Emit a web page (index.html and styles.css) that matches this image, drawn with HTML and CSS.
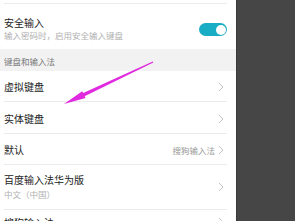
FILE: index.html
```html
<!DOCTYPE html>
<html lang="zh-CN">
<head>
<meta charset="utf-8">
<link rel="stylesheet" href="styles.css">
</head>
<body>
<div class="screen">
  <div class="panel">
    <div class="top-strip"></div>
    <div class="row row-secure">
      <div class="texts">
        <div class="title">安全输入</div>
        <div class="sub">输入密码时，启用安全输入键盘</div>
      </div>
      <div class="toggle"><span class="knob"></span></div>
    </div>
    <div class="section">键盘和输入法</div>
    <div class="row row-single first">
      <div class="title">虚拟键盘</div>
      <svg class="chev" viewBox="0 0 6 10" width="6" height="10"><polyline points="1,1 5,5 1,9" /></svg>
    </div>
    <div class="row row-single tall">
      <div class="title">实体键盘</div>
      <svg class="chev" viewBox="0 0 6 10" width="6" height="10"><polyline points="1,1 5,5 1,9" /></svg>
    </div>
    <div class="row row-single">
      <div class="title">默认</div>
      <div class="right">
        <span class="value">搜狗输入法</span>
        <svg class="chev" viewBox="0 0 6 10" width="6" height="10"><polyline points="1,1 5,5 1,9" /></svg>
      </div>
    </div>
    <div class="row row-double">
      <div class="texts">
        <div class="title">百度输入法华为版</div>
        <div class="sub">中文（中国）</div>
      </div>
      <svg class="chev" viewBox="0 0 6 10" width="6" height="10"><polyline points="1,1 5,5 1,9" /></svg>
    </div>
    <div class="row row-last">
      <div class="title">搜狗输入法</div>
      <svg class="chev" viewBox="0 0 6 10" width="6" height="10"><polyline points="1,1 5,5 1,9" /></svg>
    </div>
  </div>
  <div class="dark"></div>
  <svg class="arrow" viewBox="0 0 295 221" width="295" height="221">
    <polygon points="153.3,62.5 84.6,96.2 85.6,98.0 64,104 82.2,91.2 83.2,93.0 152.7,61.5" />
  </svg>
</div>
</body>
</html>
```
FILE: styles.css
```css
html, body {
  margin: 0;
  padding: 0;
}
body {
  width: 295px;
  height: 221px;
  overflow: hidden;
  font-family: "Noto Sans CJK SC", "Noto Sans", sans-serif;
  background: #464646;
}
.screen {
  position: relative;
  display: flex;
  width: 295px;
  height: 221px;
  overflow: hidden;
}
.panel {
  width: 236px;
  flex: none;
  background: #ffffff;
  display: flex;
  flex-direction: column;
  overflow: hidden;
}
.dark {
  flex: 1;
  background: #464646;
  border-left: 1px solid #3a3a3a;
}
.top-strip {
  height: 3px;
  margin: 0 9px 0 4px;
  border-bottom: 1px solid #ebebeb;
  flex: none;
}
.row {
  flex: none;
  margin: 0 9px 0 4px;
  display: flex;
  align-items: center;
  justify-content: space-between;
  border-bottom: 1px solid #ebebeb;
  box-sizing: border-box;
}
.title {
  font-size: 10px;
  line-height: 12px;
  color: #222222;
  white-space: nowrap;
}
.sub {
  font-size: 8.5px;
  line-height: 11px;
  color: #b0b0b0;
  white-space: nowrap;
}
.row-secure {
  height: 45px;
  align-items: flex-start;
  padding-top: 13px;
  border-bottom: none;
}
.row-secure .texts {
  display: flex;
  flex-direction: column;
  gap: 1px;
}
.toggle {
  margin-top: 6px;
  width: 28px;
  height: 13px;
  border-radius: 6.5px;
  background: #18adc4;
  display: flex;
  align-items: center;
  justify-content: flex-end;
  padding-right: 1.5px;
  box-sizing: border-box;
}
.knob {
  width: 10px;
  height: 10px;
  border-radius: 50%;
  background: #ffffff;
}
.section {
  flex: none;
  height: 22px;
  box-sizing: border-box;
  background: #f2f2f2;
  padding: 7px 0 0 4px;
  font-size: 8.5px;
  line-height: 11px;
  color: #777777;
}
.row-single {
  height: 31px;
  padding-top: 2px;
}
.row-single.first {
  height: 31px;
}
.row-single.tall {
  height: 32px;
}
.row-double {
  height: 45px;
}
.row-double .texts {
  display: flex;
  flex-direction: column;
  gap: 3px;
}
.row-last {
  height: 30px;
  align-items: flex-start;
  padding-top: 7px;
  border-bottom: none;
}
.right {
  display: flex;
  align-items: center;
  gap: 3px;
}
.value {
  font-size: 8.5px;
  line-height: 11px;
  color: #999999;
}
.chev {
  margin-right: 3px;
  flex: none;
}
.right .chev {
  margin-right: 3px;
}
.chev polyline {
  fill: none;
  stroke: #c4c4c4;
  stroke-width: 1;
}
.arrow {
  position: absolute;
  left: 0;
  top: 0;
  pointer-events: none;
}
.arrow polygon {
  fill: #e02ae0;
}
```
